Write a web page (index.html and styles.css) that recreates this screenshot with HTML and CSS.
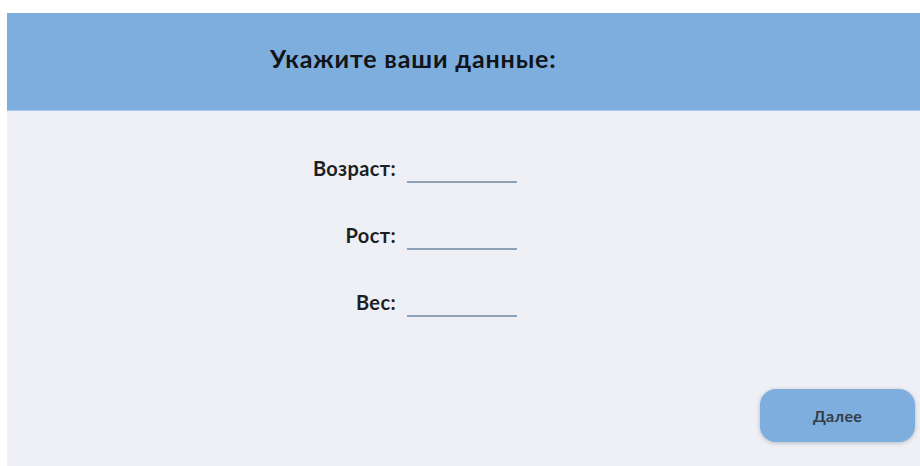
FILE: index.html
```html
<!DOCTYPE html>
<html lang="ru">
<head>
<meta charset="utf-8">
<title>Данные</title>
<link rel="stylesheet" href="styles.css">
</head>
<body>
<div class="app">
  <header class="topbar">
    <h1 class="title">Укажите ваши данные:</h1>
  </header>
  <main class="content">
    <form class="fields">
      <label class="label" for="age">Возраст:</label>
      <input class="field" id="age" type="text">
      <label class="label" for="height">Рост:</label>
      <input class="field" id="height" type="text">
      <label class="label" for="weight">Вес:</label>
      <input class="field" id="weight" type="text">
    </form>
    <div class="actions">
      <button class="next" type="button">Далее</button>
    </div>
  </main>
</div>
</body>
</html>
```
FILE: styles.css
```css
html, body {
  margin: 0;
  padding: 0;
  background: #ffffff;
  font-family: Lato, "Noto Sans", sans-serif;
}

.app {
  margin: 13px 0 0 7px;
  height: 453px;
  display: flex;
  flex-direction: column;
  overflow: hidden;
}

.topbar {
  height: 98px;
  background: #7eaedd;
  border-bottom: 1px solid #a9c8ea;
  display: flex;
  align-items: center;
  padding: 0 0 7px 263px;
  box-sizing: border-box;
}

.title {
  margin: 0;
  font-size: 25px;
  font-weight: 700;
  color: #111418;
  letter-spacing: 0.85px;
}

.content {
  flex: 1;
  background: #eff0f5;
  display: flex;
  flex-direction: column;
}

.fields {
  margin: 5px 0 0 289px;
  display: grid;
  grid-template-columns: 100px 110px;
  grid-auto-rows: 67px;
  column-gap: 11px;
  align-items: end;
}

.label {
  text-align: right;
  font-size: 20px;
  font-weight: 700;
  color: #1c1f24;
  letter-spacing: 0.4px;
  padding-bottom: 3px;
}

.field {
  height: 20px;
  border: none;
  border-bottom: 2px solid #8ea3b8;
  background: transparent;
  padding: 0;
  outline: none;
}

.actions {
  margin-top: auto;
  display: flex;
  justify-content: flex-end;
  padding: 0 5px 24px 0;
}

.next {
  width: 155px;
  height: 53px;
  border: none;
  border-radius: 16px;
  background: #7eaedd;
  box-shadow: 0 1px 4px rgba(60, 80, 110, 0.35);
  font-family: Lato, "Noto Sans", sans-serif;
  font-size: 16px;
  font-weight: 700;
  color: #333c48;
  letter-spacing: 0.3px;
}
```
